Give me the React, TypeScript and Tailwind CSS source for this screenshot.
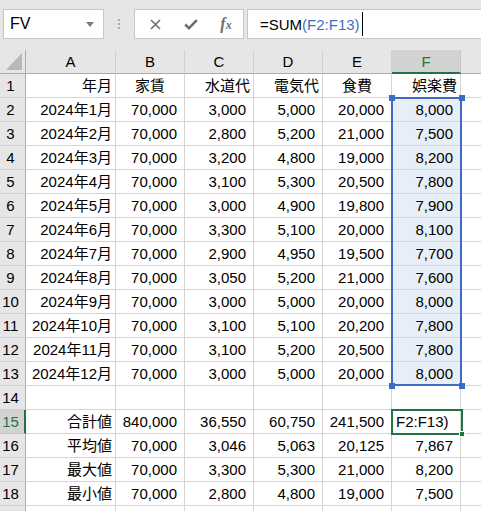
import React from "react";

const C = ["3,000","2,800","3,200","3,100","3,000","3,300","2,900","3,050","3,000","3,100","3,100","3,000"];
const D = ["5,000","5,200","4,800","5,300","4,900","5,100","4,950","5,200","5,000","5,100","5,200","5,000"];
const E = ["20,000","21,000","19,000","20,500","19,800","20,000","19,500","21,000","20,000","20,200","20,500","20,000"];
const F = ["8,000","7,500","8,200","7,800","7,900","8,100","7,700","7,600","8,000","7,800","7,800","8,000"];

type Cell = { v: string; align?: "r" | "c" | "l"; num?: boolean };

function rowsData(): Cell[][] {
  const rows: Cell[][] = [];
  rows.push([
    { v: "年月" },
    { v: "家賃", align: "c" },
    { v: "水道代" },
    { v: "電気代" },
    { v: "食費", align: "c" },
    { v: "娯楽費" },
  ]);
  for (let i = 0; i < 12; i++) {
    rows.push([
      { v: `2024年${i + 1}月` },
      { v: "70,000", num: true },
      { v: C[i], num: true },
      { v: D[i], num: true },
      { v: E[i], num: true },
      { v: F[i], num: true },
    ]);
  }
  rows.push([{ v: "" }, { v: "" }, { v: "" }, { v: "" }, { v: "" }, { v: "" }]);
  rows.push([
    { v: "合計値" },
    { v: "840,000", num: true },
    { v: "36,550", num: true },
    { v: "60,750", num: true },
    { v: "241,500", num: true },
    { v: "F2:F13)", align: "l" },
  ]);
  rows.push([
    { v: "平均値" },
    { v: "70,000", num: true },
    { v: "3,046", num: true },
    { v: "5,063", num: true },
    { v: "20,125", num: true },
    { v: "7,867", num: true },
  ]);
  rows.push([
    { v: "最大値" },
    { v: "70,000", num: true },
    { v: "3,300", num: true },
    { v: "5,300", num: true },
    { v: "21,000", num: true },
    { v: "8,200", num: true },
  ]);
  rows.push([
    { v: "最小値" },
    { v: "70,000", num: true },
    { v: "2,800", num: true },
    { v: "4,800", num: true },
    { v: "19,000", num: true },
    { v: "7,500", num: true },
  ]);
  rows.push([{ v: "" }, { v: "" }, { v: "" }, { v: "" }, { v: "" }, { v: "" }]);
  return rows;
}

export default function App() {
  const rows = rowsData();
  const letters = ["A", "B", "C", "D", "E", "F"];
  return (
    <div className="w-[481px] h-[511px] overflow-hidden bg-[#e6e6e6] font-['Liberation_Sans','Noto_Sans_CJK_JP',sans-serif] text-black">
      {/* formula bar */}
      <div className="h-[50px] flex items-start pt-[9px] pl-[3px]">
        <div className="w-[101px] h-[30px] bg-white border border-[#c6c6c6] flex items-center justify-between pl-[6px] pr-[9px]">
          <span className="text-[16px] leading-none">FV</span>
          <svg width="8" height="5" viewBox="0 0 8 5">
            <path d="M0 0 L8 0 L4 5 Z" fill="#7a7a7a" />
          </svg>
        </div>
        <div className="w-[30px] h-[30px] flex flex-col items-center justify-center gap-[2px]">
          <div className="w-[2px] h-[2px] bg-[#a8a8a8]" />
          <div className="w-[2px] h-[2px] bg-[#a8a8a8]" />
          <div className="w-[2px] h-[2px] bg-[#a8a8a8]" />
        </div>
        <div className="w-[110px] h-[30px] bg-white border border-[#c6c6c6] flex items-center">
          <div className="w-[38px] flex justify-center pl-[2px]">
            <svg width="11" height="11" viewBox="0 0 11 11">
              <path d="M1 1 L10 10 M10 1 L1 10" stroke="#707070" strokeWidth="1.6" />
            </svg>
          </div>
          <div className="w-[36px] flex justify-center">
            <svg width="14" height="11" viewBox="0 0 14 11">
              <path d="M1.2 5.5 L5 9.2 L12.8 1.2" stroke="#707070" strokeWidth="2.6" fill="none" />
            </svg>
          </div>
          <div className="w-[34px] flex justify-center">
            <span className="font-['Liberation_Serif',serif] italic font-bold text-[#6e6e6e] text-[16px] leading-none">
              f<span className="text-[12px]">x</span>
            </span>
          </div>
        </div>
        <div className="ml-[3px] flex-1 h-[30px] bg-white border border-[#c6c6c6] border-r-0 flex items-center pl-[12px]">
          <span className="text-[15px] leading-none whitespace-nowrap">
            =SUM<span className="text-[#3c6fc6]">(F2:F13)</span>
          </span>
          <span className="ml-[2px] w-[1px] h-[24px] bg-black" />
        </div>
      </div>

      {/* grid */}
      <div className="relative">
        <div className="grid grid-cols-[26px_90px_69px_69px_69px_69px_69px_20px] auto-rows-[24px]">
          {/* header row */}
          <div className="bg-[#e6e6e6] border-r border-b border-[#ababab] relative">
            <svg className="absolute right-[3px] bottom-[3px]" width="16" height="17" viewBox="0 0 16 17">
              <path d="M16 0 L16 17 L0 17 Z" fill="#b8b8b8" />
            </svg>
          </div>
          {letters.map((l) =>
            l === "F" ? (
              <div
                key={l}
                className="bg-[#d2d2d2] border-r border-[#c4c4c4] border-b-2 border-b-[#217346] flex items-center justify-center text-[15px] text-[#217346] leading-none"
              >
                {l}
              </div>
            ) : (
              <div
                key={l}
                className="bg-[#e6e6e6] border-r border-[#d0d0d0] border-b border-b-[#ababab] flex items-center justify-center text-[15px] leading-none"
              >
                {l}
              </div>
            )
          )}
          <div className="bg-[#e6e6e6] border-b border-[#ababab]" />

          {rows.map((r, ri) => {
            const rowNum = ri + 1;
            const active = rowNum === 15;
            const label = rowNum <= 18 ? String(rowNum) : "";
            return (
              <React.Fragment key={ri}>
                {active ? (
                  <div className="bg-[#d2d2d2] border-b border-[#c4c4c4] border-r-2 border-r-[#217346] flex items-center justify-center pr-[3px] text-[15px] text-[#217346] leading-none">
                    {label}
                  </div>
                ) : (
                  <div className="bg-[#e6e6e6] border-b border-[#d0d0d0] border-r border-r-[#ababab] flex items-center justify-center pr-[4px] text-[15px] leading-none">
                    {label}
                  </div>
                )}
                {r.map((c, ci) => {
                  const sel = ci === 5 && rowNum >= 2 && rowNum <= 13;
                  const align =
                    c.align === "c"
                      ? "justify-center"
                      : c.align === "l"
                      ? "justify-start pl-[4px]"
                      : c.num
                      ? "justify-end pr-[7px]"
                      : "justify-end pr-[3px]";
                  return (
                    <div
                      key={ci}
                      className={`${sel ? "bg-[#e8eef8]" : "bg-white"} border-r border-b border-[#d4d4d4] flex items-center ${align} text-[15px] leading-none whitespace-nowrap overflow-hidden`}
                    >
                      {c.v}
                    </div>
                  );
                })}
                <div className="bg-white border-b border-[#d4d4d4]" />
              </React.Fragment>
            );
          })}
        </div>

        {/* selection range F2:F13 */}
        <div className="absolute left-[391px] top-[47px] w-[71px] h-[289px] border-2 border-[#3d6cc4] pointer-events-none" />
        <div className="absolute left-[389px] top-[45px] w-[6px] h-[6px] bg-[#3d6cc4]" />
        <div className="absolute left-[459px] top-[45px] w-[6px] h-[6px] bg-[#3d6cc4]" />
        <div className="absolute left-[389px] top-[333px] w-[6px] h-[6px] bg-[#3d6cc4]" />
        <div className="absolute left-[459px] top-[333px] w-[6px] h-[6px] bg-[#3d6cc4]" />

        {/* active cell F15 */}
        <div className="absolute left-[391px] top-[359px] w-[72px] h-[26px] border-2 border-[#217346] pointer-events-none" />
        <div className="absolute left-[459px] top-[381px] w-[6px] h-[6px] bg-[#217346] border border-white" />
      </div>
    </div>
  );
}
